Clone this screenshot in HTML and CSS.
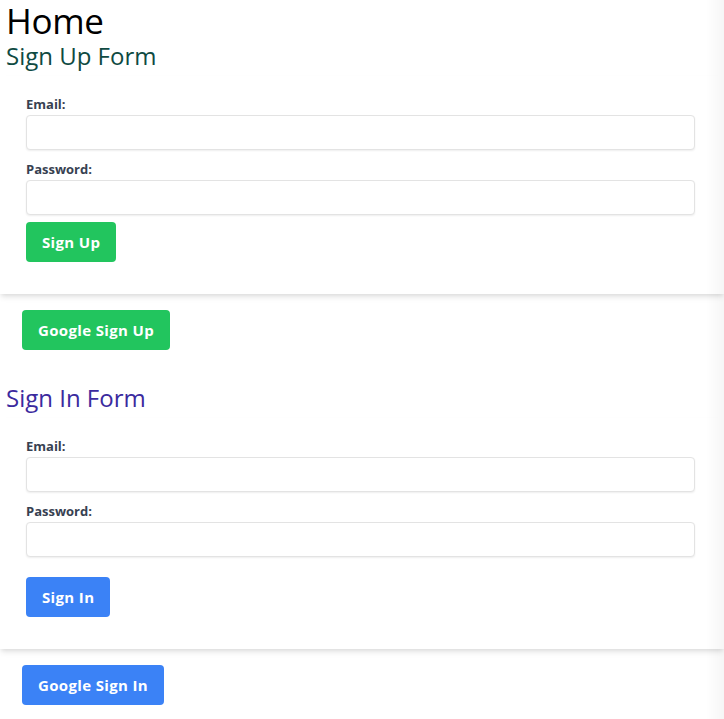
FILE: index.html
```html
<!DOCTYPE html>
<html lang="en">
<head>
<meta charset="utf-8">
<title>Home</title>
<link rel="stylesheet" href="styles.css">
</head>
<body>
<div class="page">
  <h1 class="title">Home</h1>

  <h2 class="form-title signup-title">Sign Up Form</h2>
  <form class="card">
    <label class="label" for="su-email">Email:</label>
    <input class="input" id="su-email" type="email">
    <label class="label" for="su-pass">Password:</label>
    <input class="input" id="su-pass" type="password">
    <div class="actions">
      <button type="button" class="btn btn-green">Sign Up</button>
    </div>
  </form>
  <div class="google-row">
    <button type="button" class="btn btn-green">Google Sign Up</button>
  </div>

  <h2 class="form-title signin-title">Sign In Form</h2>
  <form class="card">
    <label class="label" for="si-email">Email:</label>
    <input class="input" id="si-email" type="email">
    <label class="label" for="si-pass">Password:</label>
    <input class="input" id="si-pass" type="password">
    <div class="actions actions-wide">
      <button type="button" class="btn btn-blue">Sign In</button>
    </div>
  </form>
  <div class="google-row">
    <button type="button" class="btn btn-blue">Google Sign In</button>
  </div>
</div>
</body>
</html>
```

FILE: styles.css
```css
* { box-sizing: border-box; }

html, body {
  margin: 0;
  padding: 0;
  background: #ffffff;
}

body {
  font-family: "Open Sans", "Noto Sans", "Liberation Sans", sans-serif;
  color: #000;
}

body::after {
  content: "";
  position: fixed;
  top: 0;
  right: 0;
  bottom: 0;
  width: 18px;
  background: linear-gradient(to right, rgba(0,0,0,0), rgba(0,0,0,0.035));
  pointer-events: none;
}

.page {
  display: flex;
  flex-direction: column;
  overflow: hidden;
}

.title {
  margin: 0 0 0 6px;
  padding-top: 2px;
  font-size: 35px;
  font-weight: 400;
  line-height: 38px;
  letter-spacing: -0.3px;
}

.form-title {
  margin: 0 0 0 6px;
  font-size: 24px;
  font-weight: 400;
  line-height: 28px;
}

.signup-title { color: #0f4a42; margin-top: 2px; }
.signin-title { color: #3b2a9e; margin-top: 34px; }

.card {
  display: flex;
  flex-direction: column;
  background: #fff;
  padding: 19px 29px 32px 26px;
  margin-top: 6px;
  box-shadow: 0 4px 6px -1px rgba(0,0,0,0.1), 0 2px 4px -1px rgba(0,0,0,0.06);
}

.label {
  font-size: 13px;
  font-weight: 700;
  color: #374151;
  line-height: 18px;
  margin-bottom: 2px;
}

.input {
  height: 35px;
  width: 100%;
  border: 1px solid #e3e3e3;
  border-radius: 4px;
  box-shadow: 0 1px 2px rgba(0,0,0,0.07);
  margin: 0 0 10px 0;
  font: inherit;
  padding: 0 10px;
}

.input:last-of-type { margin-bottom: 0; }

.actions {
  display: flex;
  margin-top: 7px;
}

.actions-wide { margin-top: 20px; }

.btn {
  height: 40px;
  border: none;
  border-radius: 4px;
  padding: 0 16px;
  color: #fff;
  font-family: inherit;
  font-size: 15px;
  font-weight: 700;
  letter-spacing: 0.35px;
  cursor: pointer;
}

.btn-green { background: #22c55e; }
.btn-blue { background: #3b82f6; }

.google-row {
  display: flex;
  padding-left: 22px;
  margin-top: 16px;
}
```
